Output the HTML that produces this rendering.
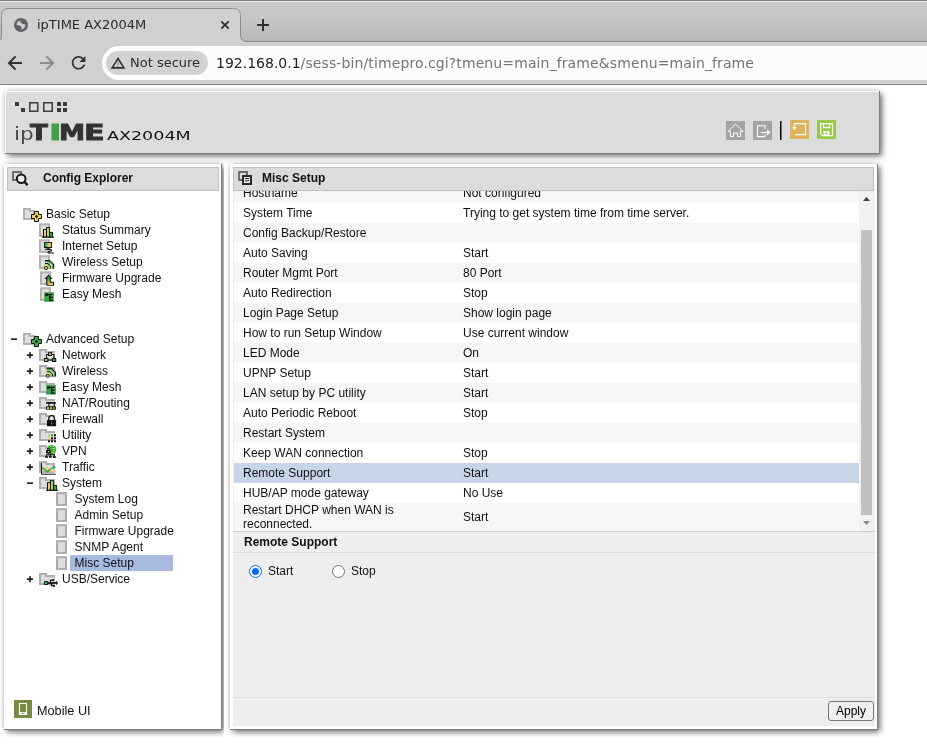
<!DOCTYPE html>
<html lang="en">
<head>
<meta charset="utf-8">
<title>ipTIME AX2004M</title>
<style>
html,body{margin:0;padding:0;}
body{width:927px;height:747px;overflow:hidden;background:#fff;position:relative;font-family:"Liberation Sans",sans-serif;font-size:12px;color:#111;}
.abs{position:absolute;}
svg{display:block;overflow:visible;}
/* ---------- browser chrome ---------- */
#chrome{position:absolute;left:0;top:0;width:927px;height:85px;background:#d0d0d0;font-family:"DejaVu Sans",sans-serif;}
#tabstrip{position:absolute;left:0;top:0;width:927px;height:42px;background:linear-gradient(#7d7d7d 0,#7d7d7d 1px,#ececec 1px,#ececec 2px,#cacaca 2px,#c6c6c6 20px,#b7b7b7 41px,#8e8e8e 41px,#8e8e8e 42px);}
#tabsvg{position:absolute;left:0;top:0;}
#tabtitle{position:absolute;left:37px;top:17px;font-size:13px;line-height:16px;color:#2a2a2a;white-space:nowrap;}
#toolbar{position:absolute;left:0;top:42px;width:927px;height:42px;background:#d0d0d0;}
#chromeline{position:absolute;left:0;top:84px;width:927px;height:1px;background:#858585;}
#omni{position:absolute;left:102px;top:46px;width:840px;height:34px;border-radius:17px;background:#fcfcfc;}
#chip{position:absolute;left:106px;top:51px;width:102px;height:24px;border-radius:12px;background:#d2d2d2;}
#chiptext{position:absolute;left:130px;top:54px;font-size:13px;line-height:17px;color:#2b2b2b;white-space:nowrap;}
#url{position:absolute;left:216px;top:54px;font-size:14px;line-height:19px;color:#757575;white-space:nowrap;letter-spacing:0.11px;}
#url b{font-weight:normal;color:#222;letter-spacing:0;}
/* ---------- page ---------- */
#page{position:absolute;left:0;top:85px;width:927px;height:652px;overflow:hidden;background:#fff;}
#leftframe{position:absolute;left:0;top:75px;width:224px;height:577px;overflow:hidden;}
.panel{position:absolute;background:#fff;box-shadow:1px 0 0 #7c7c7c,0 1px 0 #7c7c7c,1px 1px 0 #7c7c7c,3px 3px 6px rgba(0,0,0,.55),0 0 6px rgba(0,0,0,.18);}
.tbar{position:absolute;box-sizing:border-box;height:24px;background:#dcdcdc;border:1px solid #c0c0c0;font-weight:bold;font-size:12px;line-height:20px;color:#111;}

/* header */
#hdr{left:5px;top:6px;width:874px;height:62px;background:#dcdcdc;border-top:1px solid #fdfdfd;border-left:1px solid #fbfbfb;box-sizing:border-box;}
#logo-ip{position:absolute;left:13.800px;top:34.800px;font-family:"DejaVu Sans","Liberation Sans",sans-serif;font-size:17px;line-height:28px;color:#4a4a4a;white-space:nowrap;transform-origin:0 0;transform:scaleX(1.27);}
#logo-time{position:absolute;left:0;top:32px;width:110px;height:32px;}
#logo-time span{position:absolute;top:0;font-family:"DejaVu Sans","Liberation Sans",sans-serif;font-weight:bold;font-size:21px;line-height:32px;color:#333;white-space:nowrap;transform-origin:0 0;-webkit-text-stroke:0.8px #333;}
#logo-time span.g{color:#43a047;-webkit-text-stroke:0.8px #43a047;}
#logo-model{position:absolute;left:106.500px;top:38.500px;font-family:"DejaVu Sans","Liberation Sans",sans-serif;font-size:13px;line-height:24px;color:#111;white-space:nowrap;transform-origin:0 0;transform:scaleX(1.347);}

#chrome{will-change:transform;}
#page{will-change:transform;}
/* left frame */
#lpanel{left:4px;top:4px;width:217px;height:565px;}
.tl{position:absolute;white-space:nowrap;font-size:12px;line-height:16px;height:16px;color:#111;}
.tsel{position:absolute;width:103px;height:16px;background:#a9badf;}
#mobiletxt{position:absolute;left:37px;top:543px;font-size:12.700px;line-height:16px;color:#111;white-space:nowrap;}
/* main frame */
#mainframe{position:absolute;left:224px;top:75px;width:661px;height:577px;overflow:hidden;}
#mpanel{left:6px;top:4px;width:647px;height:565px;}
#mbody{position:absolute;left:233px;top:106px;width:642px;height:535px;background:#eeeeee;}
#tbl{position:absolute;left:1px;top:0;width:625px;height:340px;overflow:hidden;background:#fff;}
.tr{position:absolute;left:0;width:625px;font-size:12px;line-height:14px;color:#111;}
.tr.odd{background:#f6f6f6;}
.tr.even{background:#fff;}
.tr.sel{background:#c8d4e8;}
.c1{position:absolute;left:9px;top:50%;transform:translateY(-50%);width:200px;}
.c2{position:absolute;left:229px;top:50%;transform:translateY(-50%);white-space:nowrap;}
#sbar{position:absolute;left:626px;top:0;width:16px;height:340px;background:#f1f1f1;}
#sthumb{position:absolute;left:2px;top:39px;width:11px;height:285px;background:#c1c1c1;}
#sec{position:absolute;left:0;top:340px;width:642px;height:20px;border-top:1px solid #cfcfcf;border-bottom:1px solid #dcdcdc;font-weight:bold;font-size:12px;line-height:20px;}
#sec span{position:absolute;left:11px;top:0;}
.rad{position:absolute;box-sizing:border-box;width:13px;height:13px;border-radius:50%;background:#fff;border:1px solid #767676;}
.rad.on{border:1px solid #0a6cf5;}
.rad.on::after{content:"";position:absolute;left:2px;top:2px;width:7px;height:7px;border-radius:50%;background:#0a6cf5;}
.rl{position:absolute;font-size:12px;line-height:16px;color:#111;}
#botline{position:absolute;left:0;top:506px;width:642px;height:1px;background:#dddddd;}
#apply{position:absolute;left:595px;top:510px;width:46px;height:20px;box-sizing:border-box;border:1px solid #767676;border-radius:3px;background:#efefef;font-size:12px;line-height:18px;text-align:center;color:#000;}
</style>
</head>
<body>
<!-- ================= BROWSER CHROME ================= -->
<div id="chrome">
  <div id="tabstrip"></div>
  <div id="toolbar"></div>
  <svg id="tabsvg" width="927" height="85" viewBox="0 0 927 85">
    <path d="M-4 41.5 H-3 Q1.5 41.5 1.5 36 V15.500 Q1.5 8.5 8.500 8.5 H233.500 Q240.500 8.5 240.500 15.500 V35 Q240.500 41.5 247 41.5 H248 V43 H-4 Z" fill="#d0d0d0" stroke="#8c8c8c" stroke-width="1"/>
    <rect x="-5" y="42" width="260" height="2" fill="#d0d0d0"/>
  </svg>
  <div id="tabtitle">ipTIME AX2004M</div>
  <div id="chromeline"></div>
  <div id="omni"></div>
  <div id="chip"></div>
  <div id="chiptext">Not secure</div>
  <div id="url"><b>192.168.0.1</b>/sess-bin/timepro.cgi?tmenu=main_frame&amp;smenu=main_frame</div>
  <svg class="abs" style="left:0;top:0" width="927" height="85" viewBox="0 0 927 85">
    <!-- globe favicon -->
    <circle cx="21" cy="25" r="7" fill="#5f6368"/>
    <path d="M16.600 24.760 C16.600 22.280 18.280 20.600 20.760 20.440 C19.800 21.720 20.120 22.760 21.480 23.320 C23.000 23.960 23.960 24.920 25.400 24.280 C25.720 26.600 23.880 29.240 20.600 29.560 C22.040 28.120 21.880 26.760 20.520 26.040 C19.080 25.240 17.960 25.160 16.600 24.760 Z" fill="#d0d0d0"/>
    <!-- tab close -->
    <path d="M221.300 21.300 L228.700 28.700 M228.700 21.300 L221.300 28.700" stroke="#2a2a2a" stroke-width="1.700" fill="none"/>
    <!-- new tab plus -->
    <path d="M257 25 H269 M263 19 V31" stroke="#2f2f2f" stroke-width="2" fill="none"/>
    <!-- back -->
    <path d="M22 63 H9.500 M15.600 56.400 L9 63 L15.600 69.600" stroke="#323232" stroke-width="2" fill="none" stroke-linejoin="miter"/>
    <!-- forward -->
    <path d="M40 63 H52.500 M46.400 56.400 L53 63 L46.400 69.600" stroke="#8b8b8b" stroke-width="2" fill="none"/>
    <!-- reload -->
    <g transform="translate(68.400,52.600) scale(0.8500)">
      <path fill="#323232" d="M17.650 6.350C16.200 4.900 14.210 4 12 4c-4.420 0-7.990 3.580-7.990 8s3.570 8 7.990 8c3.730 0 6.840-2.550 7.730-6h-2.080c-.820 2.330-3.040 4-5.650 4-3.310 0-6-2.690-6-6s2.690-6 6-6c1.660 0 3.140.690 4.220 1.780L13 11h7V4l-2.350 2.350z"/>
    </g>
    <!-- not secure triangle -->
    <path d="M118 58.400 L123.900 67.900 H112.100 Z" stroke="#2d2d2d" stroke-width="1.600" fill="none" stroke-linejoin="miter"/>
    <path d="M118 61.500 V65 M118 66 V67" stroke="#8a8a8a" stroke-width="1.300" fill="none"/>
  </svg>
</div>

<!-- ================= PAGE ================= -->
<div id="page">
  <!-- header panel -->
  <div id="hdr" class="panel">
  </div>
  <svg class="abs" style="left:0;top:0" width="885" height="75" viewBox="0 85 885 75" shape-rendering="crispEdges">
    <!-- logo squares -->
    <g fill="#3a3a3a">
      <rect x="15" y="102" width="4" height="4"/><rect x="21" y="108" width="4" height="4"/>
      <rect x="57" y="102" width="4" height="4"/><rect x="63" y="102" width="4" height="4"/>
      <rect x="57" y="108" width="4" height="4"/><rect x="63" y="108" width="4" height="4"/>
    </g>
    <g fill="none" stroke="#3a3a3a" stroke-width="1.500" shape-rendering="geometricPrecision">
      <rect x="29.750" y="102.750" width="8" height="8.500"/><rect x="43.750" y="102.750" width="8.500" height="8.500"/>
    </g>
    <!-- home -->
    <rect x="726" y="121" width="19" height="19" fill="#a4a4a4"/>
    <path transform="translate(726,121)" d="M9.500 3 L2 10.500 H4.500 V15.500 H7.500 V12 H11.500 V15.500 H14.500 V10.500 H17 Z" fill="none" stroke="#fff" stroke-width="1" shape-rendering="geometricPrecision"/>
    <!-- logout -->
    <rect x="753" y="121" width="19" height="19" fill="#a4a4a4"/>
    <g transform="translate(753,121)" shape-rendering="geometricPrecision">
      <path d="M12 8 V4.700 H4.500 V15.600 H12 V13.600" fill="none" stroke="#fff" stroke-width="1.100"/>
      <path d="M7.800 11.500 H14.300" fill="none" stroke="#fff" stroke-width="1.100"/>
      <path d="M14 8.500 L17.500 11.500 L14 14.500 Z" fill="#fff"/>
    </g>
    <!-- separator -->
    <rect x="780" y="121" width="1.500" height="19" fill="#000" shape-rendering="geometricPrecision"/>
    <!-- restore (orange) -->
    <rect x="790" y="120" width="19" height="19" fill="#deb35a"/>
    <g transform="translate(790,120)" shape-rendering="geometricPrecision">
      <path d="M4.500 7.500 V3.600 H15.500 V14.600 H5" fill="none" stroke="#fff" stroke-width="1.100"/>
      <path d="M2 7 H7 L4.500 10 Z" fill="#fff"/>
    </g>
    <!-- save (green) -->
    <rect x="817" y="120" width="19" height="19" fill="#9ac94a"/>
    <g transform="translate(817,120)" shape-rendering="geometricPrecision">
      <path d="M3.600 3.600 H15.500 V15.600 H5.600 L3.600 13.600 Z" fill="none" stroke="#fff" stroke-width="1.200"/>
      <path d="M6.500 3.600 V7.600 H12.500 V3.600" fill="none" stroke="#fff" stroke-width="1.100"/>
      <rect x="6.500" y="11" width="6" height="4.600" fill="#fff"/>
      <rect x="8.500" y="12.500" width="2" height="2" fill="#9ac94a"/>
    </g>
  </svg>
  <!-- left frame -->
  <div id="leftframe">
    <div id="lpanel" class="panel"></div>
    <div class="tbar" style="left:7px;top:7px;width:212px;"><span style="position:absolute;left:35px;top:0;">Config Explorer</span></div>
    <div class="tl" style="left:46px;top:46px">Basic Setup</div><div class="tl" style="left:62px;top:62px">Status Summary</div><div class="tl" style="left:62px;top:78px">Internet Setup</div><div class="tl" style="left:62px;top:94px">Wireless Setup</div><div class="tl" style="left:62px;top:110px">Firmware Upgrade</div><div class="tl" style="left:62px;top:126px">Easy Mesh</div><div class="tl" style="left:46px;top:171px">Advanced Setup</div><div class="tl" style="left:62px;top:187px">Network</div><div class="tl" style="left:62px;top:203px">Wireless</div><div class="tl" style="left:62px;top:219px">Easy Mesh</div><div class="tl" style="left:62px;top:235px">NAT/Routing</div><div class="tl" style="left:62px;top:251px">Firewall</div><div class="tl" style="left:62px;top:267px">Utility</div><div class="tl" style="left:62px;top:283px">VPN</div><div class="tl" style="left:62px;top:299px">Traffic</div><div class="tl" style="left:62px;top:315px">System</div><div class="tl" style="left:74.5px;top:331px">System Log</div><div class="tl" style="left:74.5px;top:347px">Admin Setup</div><div class="tl" style="left:74.5px;top:363px">Firmware Upgrade</div><div class="tl" style="left:74.5px;top:379px">SNMP Agent</div><div class="tsel" style="left:70px;top:395px"></div><div class="tl" style="left:74.5px;top:395px">Misc Setup</div><div class="tl" style="left:62px;top:411px">USB/Service</div>
    <svg class="abs" style="left:0;top:0" width="224" height="577" viewBox="0 160 224 577">
      <!-- search icon -->
      <rect x="13" y="172" width="8" height="8" fill="none" stroke="#6e6e6e" stroke-width="2"/>
      <circle cx="21.200" cy="178.700" r="4.300" fill="#ececec" stroke="#111" stroke-width="2"/>
      <path d="M24.300 181.800 L27.600 185.100" stroke="#111" stroke-width="2.200"/>
      <path d="M24 209 H30 V211 H34 V219 H24 Z" fill="#dedede" stroke="#b2b2b2" stroke-width="2"/><path d="M34.5 211.5 h4 v3 h3 v4 h-3 v3 h-4 v-3 h-3 v-4 h3 Z" fill="#f8cf5a" stroke="#111" stroke-width="1"/><path d="M36.5 214.6 l1.5 1.9 l-1.5 1.9 l-1.5 -1.9 Z" fill="#111"/><rect x="40" y="224.3" width="9" height="11.6" fill="#dedede" stroke="#b2b2b2" stroke-width="2"/><rect x="43" y="229" width="4" height="8.2" fill="#111"/><rect x="44" y="230" width="2" height="6.8" fill="#f8c864"/><rect x="46" y="227.1" width="4" height="10" fill="#111"/><rect x="47" y="228.1" width="2.1" height="8.7" fill="#a8e048"/><rect x="49.2" y="231.9" width="3.8" height="5.2" fill="#111"/><rect x="50.1" y="232.9" width="2" height="3.9" fill="#3cb04a"/><rect x="42.1" y="236.6" width="11.8" height="1.2" fill="#111"/><rect x="40" y="240.3" width="9" height="11.6" fill="#dedede" stroke="#b2b2b2" stroke-width="2"/><defs><linearGradient id="mg237" x1="0" x2="1" y1="0" y2="0"><stop offset="0" stop-color="#2fa845"/><stop offset="0.3" stop-color="#3cb04a"/><stop offset="0.5" stop-color="#a6e040"/><stop offset="0.7" stop-color="#f8c060"/><stop offset="1" stop-color="#f8b860"/></linearGradient></defs><rect x="44" y="242.1" width="8" height="5.9" fill="#111"/><rect x="45" y="243" width="6.1" height="4" fill="url(#mg237)"/><rect x="47.4" y="248" width="1.4" height="1" fill="#111"/><rect x="45.2" y="248.7" width="5.6" height="1.2" fill="#111"/><path d="M50.6 249.6 q1.4 0.5 0.6 1.2 L48.2 251.9 q-0.8 0.6 0.2 1.1 H53.9" stroke="#111" stroke-width="1.1" fill="none"/><rect x="40" y="256.3" width="9" height="11.6" fill="#dedede" stroke="#b2b2b2" stroke-width="2"/><path d="M45 260.6 L49.6 260.6 L53.6 264.4 L53.6 268.8" fill="none" stroke="#111" stroke-width="1.15"/><path d="M45 261.6 L49.2 261.6 L52.6 264.8 L52.6 268.8" fill="none" stroke="#2fa33f" stroke-width="1.15"/><path d="M45 263.6 L47.6 263.6 L50.6 266.4 L50.6 268.8" fill="none" stroke="#111" stroke-width="1.15"/><path d="M45 264.6 L47.2 264.6 L49.6 266.8 L49.6 268.8" fill="none" stroke="#a6e040" stroke-width="1.15"/><circle cx="46" cy="268" r="2" fill="#111"/><rect x="45" y="267" width="2" height="2" fill="#f8c458"/><rect x="41" y="272.3" width="9" height="11.6" fill="#dedede" stroke="#b2b2b2" stroke-width="2"/><path d="M48.5 274.6 L52.7 279 H50.7 V281.7 H54 V285.8 H47 L46.2 285 V279 H44.4 Z" fill="#111"/><path d="M48.5 276 L50.6 278.2 H46.4 Z" fill="#3aa846"/><rect x="47.3" y="278.2" width="2.4" height="1.9" fill="#3aa846"/><rect x="47.3" y="280" width="2.4" height="1.9" fill="#86b428"/><path d="M47.3 281.8 H49.7 V283 L48.4 284.9 H47.7 L47.3 284.4 Z" fill="#a6e050"/><path d="M49.7 282.8 H53 V284.9 H48.4 Z" fill="#f8c060"/><rect x="41" y="288.3" width="9" height="11.6" fill="#dedede" stroke="#b2b2b2" stroke-width="2"/><rect x="44" y="292.1" width="10" height="9.8" fill="#5cc060"/><rect x="44.6" y="292.7" width="8.8" height="8.6" fill="#38a046"/><rect x="45.2" y="293.5" width="2.9" height="2.4" fill="#111"/><path d="M48 294.5 H52.8 M49.7 294.5 V300.3 H52.8 M49.7 297.4 H52.8" stroke="#111" stroke-width="1.2" fill="none"/><path d="M11 339.2 h6" stroke="#222" stroke-width="1.7" fill="none"/><path d="M24 334 H30 V336 H34 V344 H24 Z" fill="#dedede" stroke="#b2b2b2" stroke-width="2"/><path d="M34.5 336.5 h4 v3 h3 v4 h-3 v3 h-4 v-3 h-3 v-4 h3 Z" fill="#3cae4c" stroke="#111" stroke-width="1"/><path d="M36.5 339.6 l1.5 1.9 l-1.5 1.9 l-1.5 -1.9 Z" fill="#111"/><path d="M27 355.2 h6 M30 352.2 v6" stroke="#222" stroke-width="1.7" fill="none"/><path d="M39 349.1 H47 V351.1 H54.9 V360.9 H39 Z" fill="#adadad"/><path d="M41 351 H45 V353 H54 V359 H41 Z" fill="#dedede"/><path d="M48 354.5 H46.5 V358 M52 354.5 H53.8 V358 M48 360 H52.5" fill="none" stroke="#111" stroke-width="1.1"/><rect x="48" y="352.2" width="4" height="3.8" fill="#111"/><rect x="49" y="353.2" width="2" height="1.8" fill="#f8c458"/><rect x="44" y="358" width="4.4" height="4" fill="#111"/><rect x="45" y="359" width="2.3" height="2" fill="#a8e048"/><rect x="52" y="358" width="4.2" height="4" fill="#111"/><rect x="53" y="359" width="2.2" height="2" fill="#3cb04a"/><path d="M27 371.2 h6 M30 368.2 v6" stroke="#222" stroke-width="1.7" fill="none"/><path d="M39 365.1 H47 V367.1 H54.9 V376.9 H39 Z" fill="#adadad"/><path d="M41 367 H45 V369 H54 V375 H41 Z" fill="#dedede"/><path d="M46.8 368.4 L51.4 368.4 L55.4 372.2 L55.4 376.6" fill="none" stroke="#111" stroke-width="1.15"/><path d="M46.8 369.4 L51 369.4 L54.4 372.6 L54.4 376.6" fill="none" stroke="#2fa33f" stroke-width="1.15"/><path d="M46.8 371.4 L49.4 371.4 L52.4 374.2 L52.4 376.6" fill="none" stroke="#111" stroke-width="1.15"/><path d="M46.8 372.4 L49 372.4 L51.4 374.6 L51.4 376.6" fill="none" stroke="#a6e040" stroke-width="1.15"/><circle cx="47.8" cy="375.8" r="2" fill="#111"/><rect x="46.8" y="374.8" width="2" height="2" fill="#f8c458"/><path d="M27 387.2 h6 M30 384.2 v6" stroke="#222" stroke-width="1.7" fill="none"/><path d="M39 381.1 H47 V383.1 H54.9 V392.9 H39 Z" fill="#adadad"/><path d="M41 383 H45 V385 H54 V391 H41 Z" fill="#dedede"/><rect x="46" y="384.9" width="10" height="9.8" fill="#5cc060"/><rect x="46.6" y="385.5" width="8.8" height="8.6" fill="#38a046"/><rect x="47.2" y="386.3" width="2.9" height="2.4" fill="#111"/><path d="M50 387.3 H54.8 M51.7 387.3 V393.1 H54.8 M51.7 390.2 H54.8" stroke="#111" stroke-width="1.2" fill="none"/><path d="M27 403.2 h6 M30 400.2 v6" stroke="#222" stroke-width="1.7" fill="none"/><path d="M39 397.1 H47 V399.1 H54.9 V408.9 H39 Z" fill="#adadad"/><path d="M41 399 H45 V401 H54 V407 H41 Z" fill="#dedede"/><rect x="46.1" y="402" width="9.8" height="1.7" rx="0.5" fill="#111"/><rect x="48.3" y="403.5" width="1.1" height="3" fill="#111"/><rect x="53.8" y="403.5" width="1.1" height="3" fill="#111"/><rect x="46.1" y="406.3" width="9.8" height="3.5" rx="0.5" fill="#111"/><rect x="47" y="407.2" width="2" height="1.9" fill="#f8c458"/><rect x="50" y="407.2" width="2" height="1.9" fill="#a8e048"/><rect x="53" y="407.2" width="2" height="1.9" fill="#3cb04a"/><path d="M27 419.2 h6 M30 416.2 v6" stroke="#222" stroke-width="1.7" fill="none"/><path d="M39 413.1 H47 V415.1 H54.9 V424.9 H39 Z" fill="#adadad"/><path d="M41 415 H45 V417 H54 V423 H41 Z" fill="#dedede"/><path d="M48.7 420.6 V418.6 A2.9 2.9 0 0 1 54.5 418.6 V420.6" fill="#e6e6e6" stroke="#111" stroke-width="1.3"/><rect x="47" y="420" width="9.1" height="6.3" rx="0.6" fill="#111"/><rect x="51.1" y="421.6" width="0.9" height="3" fill="#3cb04a"/><path d="M27 435.2 h6 M30 432.2 v6" stroke="#222" stroke-width="1.7" fill="none"/><path d="M39 429.1 H47 V431.1 H54.9 V440.9 H39 Z" fill="#adadad"/><path d="M41 431 H45 V433 H54 V439 H41 Z" fill="#dedede"/><rect x="48" y="434.3" width="2" height="2" fill="#9edc3c"/><rect x="51" y="434.3" width="2" height="2" fill="#2a9a3a"/><rect x="54" y="434.3" width="2" height="2" fill="#111"/><rect x="48" y="437.3" width="2" height="2" fill="#f8c050"/><rect x="51" y="437.3" width="2" height="2" fill="#111"/><rect x="54" y="437.3" width="2" height="2" fill="#111"/><rect x="48" y="440.3" width="2" height="2" fill="#111"/><rect x="51" y="440.3" width="2" height="2" fill="#111"/><rect x="54" y="440.3" width="2" height="2" fill="#111"/><path d="M27 451.2 h6 M30 448.2 v6" stroke="#222" stroke-width="1.7" fill="none"/><path d="M39 445.1 H47 V447.1 H54.9 V456.9 H39 Z" fill="#adadad"/><path d="M41 447 H45 V449 H54 V455 H41 Z" fill="#dedede"/><circle cx="51.7" cy="449.5" r="4.6" fill="#2fa33f"/><path d="M49.8 446.4 h1 M52 446.4 h2 M50.6 448.5 h0.9 M52.5 448.5 h2.6 M52.5 450.5 h2.6 M52 452.5 h2" stroke="#a6e040" stroke-width="1" fill="none"/><rect x="47.3" y="448.2" width="2.3" height="2.2" fill="#111"/><rect x="46.1" y="450" width="4.4" height="3.4" fill="#111"/><rect x="48" y="449" width="0.9" height="0.9" fill="#3cb04a"/><rect x="47.9" y="451" width="1.2" height="1.2" fill="#f8c050"/><path d="M46.4 454.7 H55 M46.6 454.7 v1.6 M50.3 453.2 v3.2 M54.4 454.7 v1.6 M48.3 453.2 v1.5" stroke="#111" stroke-width="1" fill="none"/><rect x="45.2" y="456.1" width="2.6" height="1.8" fill="#111"/><rect x="49.2" y="456.1" width="2.4" height="1.8" fill="#111"/><rect x="53" y="456.1" width="2.8" height="1.8" fill="#111"/><path d="M27 467.2 h6 M30 464.2 v6" stroke="#222" stroke-width="1.7" fill="none"/><path d="M39 461.1 H47 V463.1 H54.9 V472.9 H39 Z" fill="#adadad"/><path d="M41 463 H45 V465 H54 V471 H41 Z" fill="#dedede"/><path d="M41.5 463.1 V474.2 H55.8" stroke="#111" stroke-width="1" fill="none"/><path d="M42 471.3 L47 467.7 L51.9 471.6 H54.4" stroke="#f8c050" stroke-width="1.2" fill="none"/><path d="M53.5 469.6 L55.9 471.6 L53.5 473.6 Z" fill="#f8c050"/><path d="M42 467.5 L47.3 471.6 L52.9 467.3 H54.4" stroke="#2fa33f" stroke-width="1.3" fill="none"/><path d="M53.2 465 L55.9 467.3 L53.2 469.6 Z" fill="#2fa33f"/><path d="M27 483.2 h6" stroke="#222" stroke-width="1.7" fill="none"/><path d="M39 477.1 H47 V479.1 H54.9 V488.9 H39 Z" fill="#adadad"/><path d="M41 479 H45 V481 H54 V487 H41 Z" fill="#dedede"/><rect x="47" y="482.1" width="4" height="8.2" fill="#111"/><rect x="48" y="483.1" width="2" height="6.8" fill="#f8c864"/><rect x="50" y="480.2" width="4" height="10" fill="#111"/><rect x="51" y="481.2" width="2.1" height="8.7" fill="#a8e048"/><rect x="53.2" y="485" width="3.8" height="5.2" fill="#111"/><rect x="54.1" y="486" width="2" height="3.9" fill="#3cb04a"/><rect x="46.1" y="489.7" width="11.8" height="1.2" fill="#111"/><rect x="57" y="493.2" width="9" height="11.7" fill="#dedede" stroke="#ababab" stroke-width="2"/><rect x="57" y="509.2" width="9" height="11.7" fill="#dedede" stroke="#ababab" stroke-width="2"/><rect x="57" y="525.2" width="9" height="11.7" fill="#dedede" stroke="#ababab" stroke-width="2"/><rect x="57" y="541.2" width="9" height="11.7" fill="#dedede" stroke="#ababab" stroke-width="2"/><rect x="57" y="557.2" width="9" height="11.7" fill="#dedede" stroke="#ababab" stroke-width="2"/><path d="M27 579.2 h6 M30 576.2 v6" stroke="#222" stroke-width="1.7" fill="none"/><path d="M39 573.1 H47 V575.1 H54.9 V584.9 H39 Z" fill="#adadad"/><path d="M41 575 H45 V577 H54 V583 H41 Z" fill="#dedede"/><rect x="44" y="581.1" width="3.9" height="3.8" rx="0.4" fill="#111"/><rect x="44.95" y="582" width="2.1" height="2" fill="#44c858"/><path d="M47.8 583 H56.5" stroke="#111" stroke-width="1.7" fill="none"/><path d="M56 580.8 L58 583 L56 585.2 Z" fill="#111"/><path d="M50.4 582.6 V580.4 H52.6 M51.4 583.4 V585.7 H53.4" stroke="#111" stroke-width="1.2" fill="none"/><rect x="52.2" y="579.1" width="1.7" height="2" fill="#111"/><rect x="53" y="584.9" width="1.9" height="2" rx="0.6" fill="#111"/>
      <!-- mobile icon -->
      <rect x="14" y="700" width="18" height="18" fill="#768a42"/>
      <rect x="19.500" y="703.500" width="7" height="11" fill="none" stroke="#fff" stroke-width="1.100"/>
      <rect x="19.500" y="712" width="7" height="2.500" fill="#fff"/>
      <rect x="21.500" y="712.800" width="3" height="0.900" fill="#768a42"/>
    </svg>
    <div id="mobiletxt">Mobile UI</div>
  </div>
  <!-- main frame -->
  <div id="mainframe">
    <div id="mpanel" class="panel"></div>
  </div>
  <div id="mbody">
    <div id="tbl"><div class="tr odd" style="top:-8px;height:20px"><div class="c1">Hostname</div><div class="c2">Not configured</div></div><div class="tr even" style="top:12px;height:20px"><div class="c1">System Time</div><div class="c2">Trying to get system time from time server.</div></div><div class="tr odd" style="top:32px;height:20px"><div class="c1">Config Backup/Restore</div><div class="c2"></div></div><div class="tr even" style="top:52px;height:20px"><div class="c1">Auto Saving</div><div class="c2">Start</div></div><div class="tr odd" style="top:72px;height:20px"><div class="c1">Router Mgmt Port</div><div class="c2">80 Port</div></div><div class="tr even" style="top:92px;height:20px"><div class="c1">Auto Redirection</div><div class="c2">Stop</div></div><div class="tr odd" style="top:112px;height:20px"><div class="c1">Login Page Setup</div><div class="c2">Show login page</div></div><div class="tr even" style="top:132px;height:20px"><div class="c1">How to run Setup Window</div><div class="c2">Use current window</div></div><div class="tr odd" style="top:152px;height:20px"><div class="c1">LED Mode</div><div class="c2">On</div></div><div class="tr even" style="top:172px;height:20px"><div class="c1">UPNP Setup</div><div class="c2">Start</div></div><div class="tr odd" style="top:192px;height:20px"><div class="c1">LAN setup by PC utility</div><div class="c2">Start</div></div><div class="tr even" style="top:212px;height:20px"><div class="c1">Auto Periodic Reboot</div><div class="c2">Stop</div></div><div class="tr odd" style="top:232px;height:20px"><div class="c1">Restart System</div><div class="c2"></div></div><div class="tr even" style="top:252px;height:20px"><div class="c1">Keep WAN connection</div><div class="c2">Stop</div></div><div class="tr sel" style="top:272px;height:20px"><div class="c1">Remote Support</div><div class="c2">Start</div></div><div class="tr even" style="top:292px;height:20px"><div class="c1">HUB/AP mode gateway</div><div class="c2">No Use</div></div><div class="tr odd" style="top:312px;height:28px"><div class="c1">Restart DHCP when WAN is<br>reconnected.</div><div class="c2">Start</div></div></div>
    <div id="sbar"><div id="sthumb"></div>
      <svg class="abs" style="left:0;top:0" width="16" height="340" viewBox="0 0 16 340"><path d="M4 10 L7.500 6 L11 10 Z" fill="#404040"/><path d="M4 330 L11 330 L7.500 334 Z" fill="#8a8a8a"/></svg>
    </div>
    <div id="sec"><span>Remote Support</span></div>
    <div class="rad on" style="left:16px;top:374px"></div><div class="rl" style="left:35px;top:372px">Start</div>
    <div class="rad" style="left:99px;top:374px"></div><div class="rl" style="left:118px;top:372px">Stop</div>
    <div id="botline"></div>
    <div id="apply">Apply</div>
  </div>
  <div class="tbar" style="left:233px;top:82px;width:641px;"><span style="position:absolute;left:28px;top:0;">Misc Setup</span>
    <svg class="abs" style="left:-1px;top:-1px" width="40" height="24" viewBox="233 167 40 24">
      <rect x="239" y="172" width="8" height="8" fill="#dcdcdc" stroke="#6e6e6e" stroke-width="2"/>
      <rect x="243" y="176" width="8" height="8" fill="#e6e6e6" stroke="#2a2a2a" stroke-width="2"/>
      <path d="M245 178.500 H249 M245 180.800 H249" stroke="#2a2a2a" stroke-width="1.100"/>
    </svg>
  </div>
  <div id="logo-ip">ip</div>
  <div id="logo-time"><span style="left:30.400px;transform:scaleX(1.25)">T</span><span class="g" style="left:49.300px;transform:scaleX(1.6)">I</span><span style="left:59px;transform:scaleX(1.25)">M</span><span style="left:83.850px;transform:scaleX(1.44)">E</span></div>
  <div id="logo-model">AX2004M</div>
</div>
</body>
</html>
